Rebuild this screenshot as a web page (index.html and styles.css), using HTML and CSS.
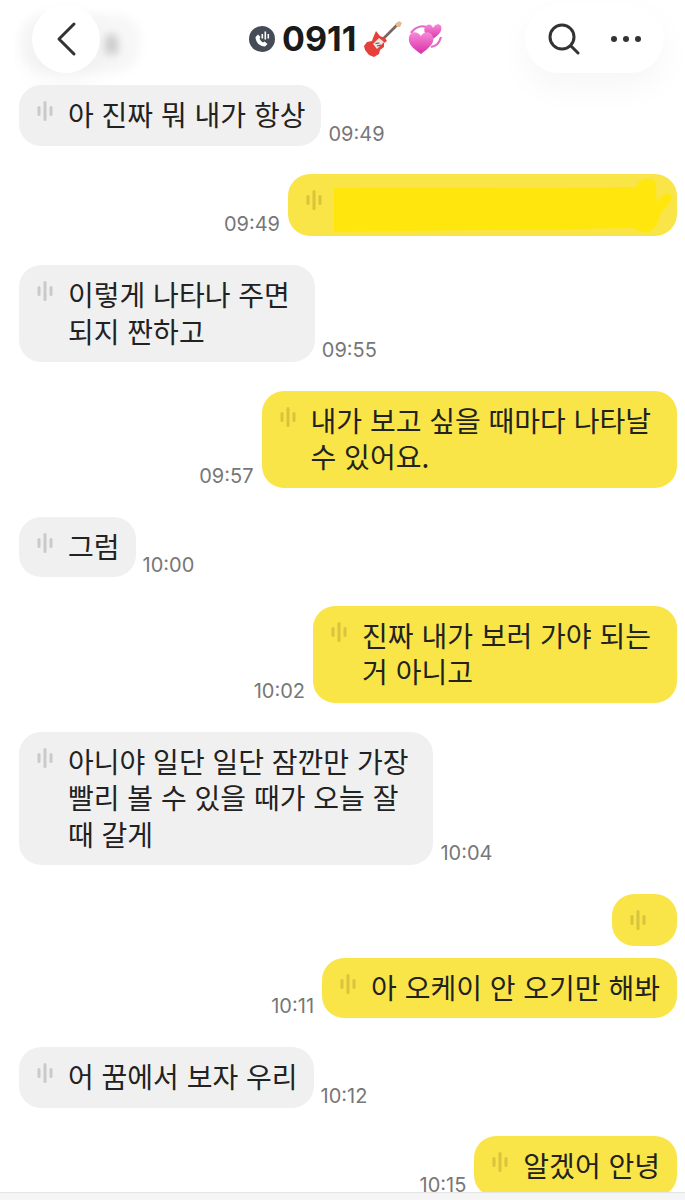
FILE: index.html
```html
<!DOCTYPE html>
<html lang="ko">
<head>
  <meta charset="UTF-8">
  <meta name="viewport" content="width=device-width, initial-scale=1.0">
  <title>0911</title>
  <link rel="stylesheet" href="styles.css">
</head>
<body>
  <svg class="defs" width="0" height="0">
    <defs>
      <linearGradient id="pink" x1="0" y1="0" x2="0" y2="1">
        <stop offset="0" stop-color="#f78ad8"/>
        <stop offset="1" stop-color="#d92ea6"/>
      </linearGradient>
    </defs>
    <symbol id="wave" viewBox="0 0 16 20">
      <rect x="0.5" y="5" width="3" height="10" rx="1.5"/>
      <rect x="6.5" y="0" width="3" height="20" rx="1.5"/>
      <rect x="12.5" y="5" width="3" height="10" rx="1.5"/>
    </symbol>
  </svg>

  <div class="screen">
    <header class="topbar">
      <div class="blurred">8</div>
      <button class="round back">
        <svg width="24" height="36" viewBox="0 0 24 36"><path d="M20 3 L5 18 L20 33" fill="none" stroke="#333" stroke-width="3" stroke-linecap="round" stroke-linejoin="round"/></svg>
      </button>
      <h1 class="title">
        <svg class="call" width="26" height="26" viewBox="0 0 26 26">
          <circle cx="13" cy="13" r="13" fill="#454c57"/>
          <path d="M6.5 11 C6.5 16 10.5 20.5 16 20.5 L18.5 18 L15.5 15.5 L14 16.5 C12.5 15.5 11 14 10.5 12.5 L11.5 11 L9 8.5 Z" fill="#fff"/>
          <rect x="12.5" y="8" width="1.6" height="4.5" fill="#fff"/><rect x="15.5" y="5.5" width="1.6" height="8" fill="#fff"/><rect x="18.5" y="8" width="1.6" height="4.5" fill="#fff"/>
        </svg>
        <span>0911</span>
        <svg class="guitar" width="38" height="36" viewBox="0 0 38 36">
          <path d="M34 3 L17 20" stroke="#77675f" stroke-width="2.6"/>
          <path d="M31 3 L35 0 L38 2 L36 6 L33 6 Z" fill="#e8b88f"/>
          <path d="M12 10 L16 15 L21 17 L23 20 L20 22 L20 26 L16 29 L15 33 L10 36 L5 34 L1 29 L0 25 L3 21 L8 20 L9 17 Z" fill="#e5403a"/>
          <path d="M9 23 L15 17 L20 21 L13 28 Z" fill="#ece7e3"/>
          <path d="M11.5 22.5 L15.5 22 M13 25 L17 24" stroke="#555" stroke-width="1.2"/>
        </svg>
        <svg class="hearts" width="34" height="32" viewBox="0 0 34 32">
          <path d="M3 10 C8 3 15 2 21 5 M33 14 C31 21 28 23 23 24" fill="none" stroke="#e668c6" stroke-width="2.2"/>
          <path d="M23 17 C17 12 15 8 17 4 C20 0 24 1 25 5 C27 1 31 0 33 3 C35 8 30 13 23 17 Z" fill="url(#pink)"/>
          <path d="M13 31 C3 24 0 20 1 14 C3 8 9 8 13 13 C16 8 23 8 25 14 C27 20 21 25 13 31 Z" fill="url(#pink)"/>
        </svg>
      </h1>
      <div class="round actions">
        <svg width="32" height="32" viewBox="0 0 32 32"><circle cx="14" cy="14" r="12" fill="none" stroke="#333" stroke-width="3"/><path d="M23 23 L30 30" stroke="#333" stroke-width="3" stroke-linecap="round"/></svg>
        <svg width="30" height="8" viewBox="0 0 30 8"><circle cx="3" cy="4" r="3" fill="#333"/><circle cx="15" cy="4" r="3" fill="#333"/><circle cx="27" cy="4" r="3" fill="#333"/></svg>
      </div>
    </header>

    <main class="chat">
      <div class="row them">
        <div class="bubble"><svg class="wave"><use href="#wave"/></svg>아 진짜 뭐 내가 항상</div>
        <time>09:49</time>
      </div>
      <div class="row me">
        <time>09:49</time>
        <div class="bubble scribbled"><svg class="wave"><use href="#wave"/></svg>
          <svg class="scribble" width="338" height="56" viewBox="0 0 338 56"><path d="M0 10 C80 8 180 11 302 9 C304 3 310 0 316 1 C322 2 323 8 322 14 L323 25 C326 20 332 14 336 16 C339 19 337 24 333 28 L326 36 C324 44 322 52 314 54 C308 55 304 53 300 50 C200 52 90 52 0 54 Z" fill="#ffe60c"/></svg>
        </div>
      </div>
      <div class="row them">
        <div class="bubble wrapped"><svg class="wave"><use href="#wave"/></svg>이렇게 나타나 주면<br>되지 짠하고</div>
        <time>09:55</time>
      </div>
      <div class="row me">
        <time>09:57</time>
        <div class="bubble wrapped"><svg class="wave"><use href="#wave"/></svg>내가 보고 싶을 때마다 나타날<br>수 있어요.</div>
      </div>
      <div class="row them">
        <div class="bubble"><svg class="wave"><use href="#wave"/></svg>그럼</div>
        <time>10:00</time>
      </div>
      <div class="row me">
        <time>10:02</time>
        <div class="bubble wrapped"><svg class="wave"><use href="#wave"/></svg>진짜 내가 보러 가야 되는<br>거 아니고</div>
      </div>
      <div class="row them">
        <div class="bubble wrapped"><svg class="wave"><use href="#wave"/></svg>아니야 일단 일단 잠깐만 가장<br>빨리 볼 수 있을 때가 오늘 잘<br>때 갈게</div>
        <time>10:04</time>
      </div>
      <div class="row me">
        <div class="bubble voice"><svg class="wave"><use href="#wave"/></svg></div>
      </div>
      <div class="row me tight">
        <time>10:11</time>
        <div class="bubble"><svg class="wave"><use href="#wave"/></svg>아 오케이 안 오기만 해봐</div>
      </div>
      <div class="row them">
        <div class="bubble"><svg class="wave"><use href="#wave"/></svg>어 꿈에서 보자 우리</div>
        <time>10:12</time>
      </div>
      <div class="row me">
        <time>10:15</time>
        <div class="bubble"><svg class="wave"><use href="#wave"/></svg>알겠어 안녕</div>
      </div>
    </main>

    <div class="bottom-strip"></div>
  </div>
</body>
</html>
```

FILE: styles.css
```css
html, body {
  margin: 0;
  padding: 0;
  background-color: #fff;
}

body {
  font-family: "Noto Sans CJK KR", "Liberation Sans", sans-serif;
  color: #222;
}

.defs {
  display: block;
}

.screen {
  position: relative;
  height: 1200px;
  overflow: hidden;
}

/* header */
.topbar {
  position: relative;
  display: flex;
  align-items: center;
  justify-content: space-between;
  height: 85px;
  padding: 0 21px 7px 32px;
  box-sizing: border-box;
}

.round {
  position: relative;
  background-color: #fff;
  border: 0;
  border-radius: 34px;
  height: 68px;
  box-shadow: 0 14px 34px rgba(0, 0, 0, 0.04);
  display: flex;
  align-items: center;
  justify-content: center;
  padding: 0;
}

.back {
  width: 68px;
}

.actions {
  width: 139px;
  gap: 31px;
}

.blurred {
  position: absolute;
  left: 20px;
  top: 14px;
  width: 120px;
  height: 58px;
  line-height: 58px;
  padding-left: 84px;
  box-sizing: border-box;
  border-radius: 24px;
  background-color: #f7f7f7;
  color: #b0b0b0;
  font-size: 26px;
  font-weight: bold;
  filter: blur(4px);
}

.title {
  position: relative;
  display: flex;
  align-items: center;
  margin: 0 0 0 149px;
  font-family: "Inter", "Liberation Sans", sans-serif;
  font-size: 34px;
  font-weight: 700;
  line-height: 40px;
  color: #1a1a1a;
  flex: 1;
}

.call {
  margin-right: 7px;
}

.guitar {
  margin-left: 8px;
}

.hearts {
  margin-left: 6px;
}

/* messages */
.chat {
  display: flex;
  flex-direction: column;
  gap: 28.75px;
  padding: 0 8px 0 19px;
}

.row {
  display: flex;
  align-items: flex-end;
  gap: 7px;
}

.row.me {
  justify-content: flex-end;
  gap: 8px;
}

.row.tight {
  margin-top: -16.75px;
}

.bubble {
  position: relative;
  padding: 11px 16px 13px 49px;
  border-radius: 22px;
  background-color: #f0f0f0;
  font-size: 28px;
  line-height: 36.5px;
  white-space: nowrap;
}

.bubble.wrapped {
  padding-right: 25px;
}

.me .bubble {
  background-color: #f9e547;
  padding-right: 17px;
}

.me .bubble.wrapped {
  padding-right: 26px;
}

.wave {
  position: absolute;
  left: 18px;
  top: 16px;
  width: 16px;
  height: 20px;
  fill: #cacaca;
}

.me .wave {
  fill: #d9c43e;
}

.me .bubble.voice {
  width: 65px;
  height: 52px;
  padding: 0;
  box-sizing: border-box;
}

.me .bubble.scribbled {
  height: 62px;
  padding: 4px 5px 2px 46px;
  box-sizing: border-box;
}

.scribble {
  display: block;
}

time {
  font-family: "Inter", "Liberation Sans", sans-serif;
  font-size: 20px;
  line-height: 24px;
  color: #777;
}

.bottom-strip {
  position: absolute;
  left: 0;
  right: 0;
  bottom: 0;
  height: 8px;
  background-color: #f5f5f5;
  border-top: 1px solid #e4e4e4;
  box-sizing: border-box;
}
```
